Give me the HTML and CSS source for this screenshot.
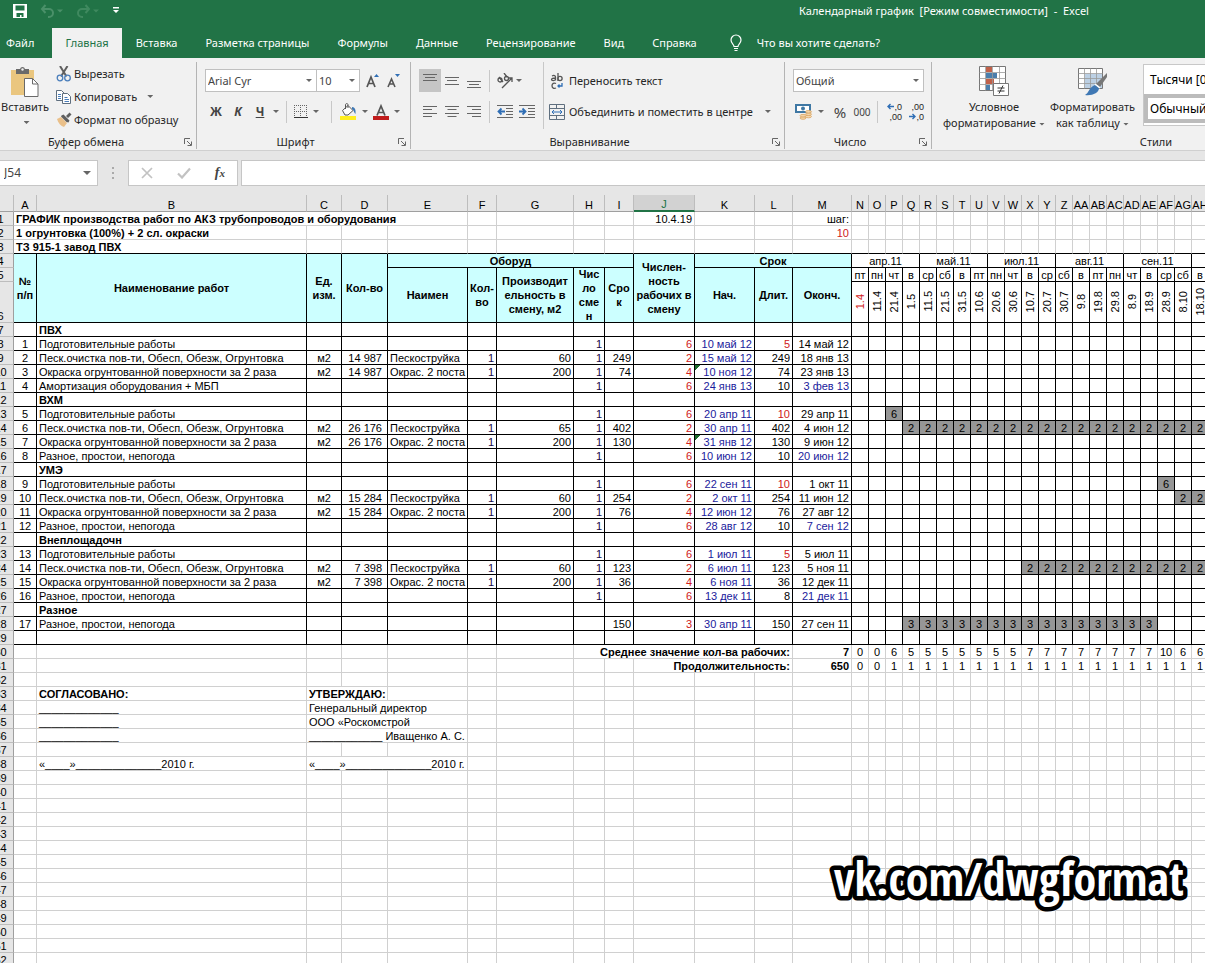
FILE: index.html
```html
<!DOCTYPE html>
<html lang="ru">
<head>
<meta charset="utf-8">
<title>Календарный график - Excel</title>
<link rel="stylesheet" href="styles.css">
</head>
<body>
<header class="titlebar">
  <div class="quick">
    <button class="ibtn" aria-label="Сохранить"><svg width="16" height="16" viewBox="0 0 16 16"><path d="M1 1h14v14H1z" fill="#fff"/><path d="M3.500 2.500h9v5h-9zM4.500 10h7v4H9.500v-2H8v2H4.500z" fill="#217346"/></svg></button>
    <button class="ibtn dim" aria-label="Отменить"><svg width="24" height="14" viewBox="0 0 24 14" fill="none" stroke="#4a9069" stroke-width="2"><path d="M5.500 1L2 5l3.500 4M2 5h7a4 4 0 0 1 0 8H8"/><path d="M17 5.500h6l-3 3z" fill="#4a9069" stroke="none"/></svg></button>
    <button class="ibtn dim" aria-label="Повторить"><svg width="24" height="14" viewBox="0 0 24 14" fill="none" stroke="#3f895f" stroke-width="2"><path d="M9.500 1L13 5L9.500 9M13 5H6a4 4 0 0 0 0 8h1"/><path d="M17 5.500h6l-3 3z" fill="#3f895f" stroke="none"/></svg></button>
    <button class="ibtn" aria-label="Настройка панели"><svg width="8" height="8" viewBox="0 0 8 8" fill="#fff"><path d="M1 0h6v1.500H1zM1 3h6L4 6z"/></svg></button>
  </div>
  <div class="doc">Календарный график&nbsp; [Режим совместимости]&nbsp; -&nbsp; Excel</div>
</header>
<nav class="tabs">
  <button class="tab file">Файл</button>
  <button class="tab on">Главная</button>
  <button class="tab">Вставка</button>
  <button class="tab">Разметка страницы</button>
  <button class="tab">Формулы</button>
  <button class="tab">Данные</button>
  <button class="tab">Рецензирование</button>
  <button class="tab">Вид</button>
  <button class="tab">Справка</button>
  <button class="tab tell"><svg width="14" height="18" viewBox="0 0 14 18" fill="none" stroke="#fff" stroke-width="1.200"><path d="M5 12.500C5 10.500 2 9.500 2 6a5 5 0 0 1 10 0c0 3.500-3 4.500-3 6.500zM5 14.500h4M5.500 16.500h3"/></svg>Что вы хотите сделать?</button>
</nav>
<section class="ribbon">
  <div class="group g-clip">
    <div class="gbody">
      <button class="big paste"><svg width="30" height="32" viewBox="0 0 30 32"><path d="M1 4h23v25H1z" fill="#eac67f"/><path d="M6 3h4a2.600 2.600 0 0 1 5 0h4v5H6z" fill="#6a6a6a"/><circle cx="12.500" cy="3.500" r="1.200" fill="#f1f1f1"/><path d="M14.500 12.500h8l5.500 5.500v12.500H14.500z" fill="#fff" stroke="#6a6a6a"/><path d="M22.500 12.500V18H28" fill="none" stroke="#6a6a6a"/></svg><span>Вставить</span><i class="caret"></i></button>
      <div class="stack">
        <button class="line"><svg width="16" height="16" viewBox="0 0 16 16" fill="none"><path d="M4 0l6.500 10.500M11.500 0L5 10.500" stroke="#5f5f5f" stroke-width="2"/><circle cx="4" cy="12" r="2.800" stroke="#4a7ebb" stroke-width="1.300"/><circle cx="11.500" cy="12" r="2.800" stroke="#4a7ebb" stroke-width="1.300"/></svg>Вырезать</button>
        <button class="line"><svg width="16" height="16" viewBox="0 0 16 16" fill="#fff" stroke="#5f6f7f"><path d="M.5 1.500h5l3 3v7h-8z"/><path d="M6.500 4.500h5l3 3v7h-8z"/><path d="M2 5.500h3M2 7.500h3M2 9.500h3M8.500 8.500h3M8.500 10.500h4.500M8.500 12.500h4.500" stroke="#4a7ebb"/></svg>Копировать<i class="caret"></i></button>
        <button class="line"><svg width="16" height="16" viewBox="0 0 16 16"><path d="M1 7l4-2 6 6-3 4C5 14 2 11 1 7z" fill="#eac08a"/><path d="M5.500 3.500l2-1 6 6-1 2-2-.5L5 4.500zM10 4l3.500-3.500 2 2L12 6z" fill="#5f5f5f"/></svg>Формат по образцу</button>
      </div>
    </div>
    <div class="glabel"><span>Буфер обмена</span><button class="launch" aria-label="Буфер обмена: параметры"><svg width="8" height="8" viewBox="0 0 8 8" fill="none" stroke="#666"><path d="M.5 6V.5H6M3 3l4 4M7.500 3.500v4h-4"/></svg></button></div>
  </div>

  <div class="group g-font">
    <div class="gbody rows">
      <div class="row">
        <span class="combo w-font"><select aria-label="Шрифт"><option>Arial Cyr</option></select><i class="caret"></i></span><span class="combo w-size"><select aria-label="Размер"><option>10</option></select><i class="caret"></i></span>
        <button class="ibtn gap6" aria-label="Увеличить размер"><svg width="16" height="18" viewBox="0 0 16 18"><path d="M2 15L6 5l4 10M3.500 11.500h5" fill="none" stroke="#555" stroke-width="1.700"/><path d="M9 5h5l-2.500-3z" fill="#2f6eb5"/></svg></button>
        <button class="ibtn gap6" aria-label="Уменьшить размер"><svg width="16" height="18" viewBox="0 0 16 18"><path d="M2 15l3.500-8L9 15M3.500 12h4" fill="none" stroke="#555" stroke-width="1.600"/><path d="M9 2h5l-2.500 3z" fill="#2f6eb5"/></svg></button>
      </div>
      <div class="row">
        <button class="fmt b">Ж</button><button class="fmt it">К</button><button class="fmt un">Ч</button><i class="caret"></i><i class="vsep"></i>
        <button class="ibtn" aria-label="Границы"><svg width="14" height="14" viewBox="0 0 14 14" stroke="#666" fill="none"><path d="M.5 0v13M6.500 0v13M12.500 0v13M0 .5h13M0 6.500h13" stroke-dasharray="1 1"/><path d="M0 12.500h14" stroke="#333"/></svg></button><i class="caret"></i><i class="vsep"></i>
        <button class="ibtn" aria-label="Цвет заливки"><svg width="18" height="18" viewBox="0 0 18 18"><path d="M1 13h16v4H1z" fill="#ffee20"/><path d="M3.500 7.500L9 2.500l5 5-5 4.500H6z" fill="#fff" stroke="#555"/><path d="M6.500 6V2c0-2 2.500-2 2.500 0v3" fill="none" stroke="#555"/><path d="M13 4c3 0 4 3 3.500 7C15 10 15 7 13 6z" fill="#3f78b4"/></svg></button><i class="caret"></i>
        <button class="ibtn" aria-label="Цвет текста"><svg width="16" height="18" viewBox="0 0 16 18"><path d="M0 13h16v4H0z" fill="#c01c1c"/><path d="M4 12.500L8 3l4 9.500M5.500 9.500h5" fill="none" stroke="#555" stroke-width="1.700"/></svg></button><i class="caret"></i>
      </div>
    </div>
    <div class="glabel"><span>Шрифт</span><button class="launch" aria-label="Шрифт: параметры"><svg width="8" height="8" viewBox="0 0 8 8" fill="none" stroke="#666"><path d="M.5 6V.5H6M3 3l4 4M7.500 3.500v4h-4"/></svg></button></div>
  </div>

  <div class="group g-align">
    <div class="gbody">
      <div class="stack2">
        <div class="row">
          <button class="al on" aria-label="По верхнему краю"><svg width="14" height="14" viewBox="0 0 14 14" stroke="#666"><path d="M0 .5h14M2 3.500h10M0 6.500h14"/></svg></button>
          <button class="al" aria-label="По середине"><svg width="14" height="14" viewBox="0 0 14 14" stroke="#666"><path d="M0 3.500h14M2 6.500h10M0 10.500h14"/></svg></button>
          <button class="al" aria-label="По нижнему краю"><svg width="14" height="14" viewBox="0 0 14 14" stroke="#666"><path d="M0 7.500h14M2 10.500h10M0 13.500h14"/></svg></button>
          <i class="vsep"></i>
          <button class="al" aria-label="Ориентация"><svg width="18" height="16" viewBox="0 0 18 16" fill="none" stroke="#555"><path d="M6 15L16 5M12 5h4v4" stroke-width="1.300"/><circle cx="4" cy="7" r="2" stroke-width="1.300"/><path d="M3 4l4 5M8 0l3 4" stroke-width="1.300"/><circle cx="10.500" cy="5.500" r="2" stroke-width="1.300"/></svg></button><i class="caret"></i>
        </div>
        <div class="row">
          <button class="al" aria-label="По левому краю"><svg width="14" height="12" viewBox="0 0 14 12" stroke="#666"><path d="M0 .5h14M0 3.500h9M0 7.500h14M0 10.500h9"/></svg></button>
          <button class="al" aria-label="По центру"><svg width="14" height="12" viewBox="0 0 14 12" stroke="#666"><path d="M0 .5h14M2.500 3.500h9M0 7.500h14M2.500 10.500h9"/></svg></button>
          <button class="al" aria-label="По правому краю"><svg width="14" height="12" viewBox="0 0 14 12" stroke="#666"><path d="M0 .5h14M5 3.500h9M0 7.500h14M5 10.500h9"/></svg></button>
          <i class="vsep"></i>
          <button class="al" aria-label="Уменьшить отступ"><svg width="16" height="13" viewBox="0 0 16 13" stroke="#666" fill="none"><path d="M0 .5h16M9 3.500h7M9 6.500h7M9 9.500h7M0 12.500h16"/><path d="M8 6.500H2M4.500 3.500l-3 3 3 3" stroke="#2f6eb5" stroke-width="1.800"/></svg></button>
          <button class="al" aria-label="Увеличить отступ"><svg width="16" height="13" viewBox="0 0 16 13" stroke="#666" fill="none"><path d="M0 .5h16M9 3.500h7M9 6.500h7M9 9.500h7M0 12.500h16"/><path d="M0 6.500h6M3.500 3.500l3 3-3 3" stroke="#2f6eb5" stroke-width="1.800"/></svg></button>
        </div>
      </div>
      <div class="stack2 wraps">
        <button class="line"><svg width="16" height="18" viewBox="0 0 16 18" fill="none" stroke="#555" stroke-width="1.300"><path d="M3 4c2-1 3.500-.5 3.500 1v3.500M6.500 6C4 6 2.500 6.200 2.500 7.500S5.500 9 6.500 7.500M9 1v8"/><circle cx="11" cy="6.500" r="2.100"/><path d="M7 11.500c-2-1-4 0-4 2.300s2 3.200 4 2.200"/><path d="M13 11v3H9M10.500 12.500L9 14l1.500 1.500" stroke="#2f6eb5"/></svg>Переносить текст</button>
        <button class="line"><svg width="16" height="16" viewBox="0 0 16 16" fill="none" stroke="#5f6f7f"><path d="M.5.5h15v15H.5zM.5 4.500h15M.5 11.500h15M7.500.5v4M7.500 11.500v4"/><path d="M3 8h10M5 6L3 8l2 2M11 6l2 2-2 2" stroke="#2f6eb5"/></svg>Объединить и поместить в центре<i class="caret"></i></button>
      </div>
    </div>
    <div class="glabel"><span>Выравнивание</span><button class="launch" aria-label="Выравнивание: параметры"><svg width="8" height="8" viewBox="0 0 8 8" fill="none" stroke="#666"><path d="M.5 6V.5H6M3 3l4 4M7.500 3.500v4h-4"/></svg></button></div>
  </div>

  <div class="group g-num">
    <div class="gbody rows">
      <div class="row"><span class="combo w-num"><select aria-label="Числовой формат"><option>Общий</option></select><i class="caret"></i></span></div>
      <div class="row">
        <button class="ibtn money" aria-label="Денежный формат"><svg width="18" height="18" viewBox="0 0 18 18"><path d="M1 2h14v7H1z" fill="#fff" stroke="#3f78a4" stroke-width="2"/><circle cx="8" cy="5.500" r="2" fill="#3f78a4"/><g fill="#f3d6ae" stroke="#dba560" stroke-width=".8"><ellipse cx="13.500" cy="13.500" rx="3" ry="1.300"/><ellipse cx="13.500" cy="11.200" rx="3" ry="1.300"/><ellipse cx="13.500" cy="8.800" rx="3" ry="1.300"/><ellipse cx="8" cy="15" rx="3" ry="1.300"/><ellipse cx="8" cy="12.700" rx="3" ry="1.300"/></g></svg></button><i class="caret"></i>
        <button class="fmt pct">%</button><button class="fmt th">000</button><i class="vsep"></i>
        <button class="dec" aria-label="Увеличить разрядность"><span><svg width="7" height="7" viewBox="0 0 7 7" fill="none" stroke="#2f6eb5" stroke-width="1.400"><path d="M7 3.500H1M3.500 1L1 3.500 3.500 6"/></svg>,0</span><span>,00</span></button>
        <button class="dec" aria-label="Уменьшить разрядность"><span>,00</span><span><svg width="7" height="7" viewBox="0 0 7 7" fill="none" stroke="#2f6eb5" stroke-width="1.400"><path d="M0 3.500h6M3.500 1L6 3.500 3.500 6"/></svg>,0</span></button>
      </div>
    </div>
    <div class="glabel"><span>Число</span><button class="launch" aria-label="Число: параметры"><svg width="8" height="8" viewBox="0 0 8 8" fill="none" stroke="#666"><path d="M.5 6V.5H6M3 3l4 4M7.500 3.500v4h-4"/></svg></button></div>
  </div>

  <div class="group g-style">
    <div class="gbody">
      <button class="big"><svg width="31" height="32" viewBox="0 0 31 32"><path d="M1.500.5h26v24h-26z" fill="#fff" stroke="#777"/><path d="M8 1h6v5H8zM8 13h8v5H8z" fill="#c0614a"/><path d="M8 7h11v5H8zM8 19h4v5H8z" fill="#4a7eac"/><path d="M1.500 6.500h26M1.500 12.500h26M1.500 18.500h26M7.500.5v24M14.500.5v24M21.500.5v24" fill="none" stroke="#999" stroke-width=".8"/><path d="M15.500 17.500h15v12h-15z" fill="#fff" stroke="#777"/><path d="M19.500 22h7M19.500 25h7M25 19.500l-4 8" stroke="#333" fill="none"/></svg><span>Условное</span><span>форматирование<i class="caret"></i></span></button>
      <button class="big"><svg width="31" height="32" viewBox="0 0 31 32"><path d="M1.500 2.500h24v20h-24z" fill="#fff" stroke="#777"/><path d="M8 8h17v14H8z" fill="#bcd0e4"/><path d="M1.500 7.500h24M1.500 12.500h24M1.500 17.500h24M7.500 2.500v20M13.500 2.500v20M19.500 2.500v20" fill="none" stroke="#999" stroke-width=".8"/><path d="M30 7v4l-7 10-4-3z" fill="#777"/><path d="M18 19l4 3c0 5-7 8-14 7 4-2 4-8 10-10z" fill="#3f78b4"/><path d="M18 18l5 4" stroke="#fff" stroke-width="1.500"/></svg><span>Форматировать</span><span>как таблицу<i class="caret"></i></span></button>
      <div class="gallery"><button class="style">Тысячи [0]</button><button class="style cur">Обычный</button></div>
    </div>
    <div class="glabel"><span>Стили</span></div>
  </div>
</section>

<section class="fbar">
  <div class="namebox"><input aria-label="Имя ячейки" value="J54"><i class="caret"></i></div>
  <svg class="dots" width="3" height="12" viewBox="0 0 3 12" fill="#aaa"><path d="M0 0h2v2H0zM0 5h2v2H0zM0 10h2v2H0z"/></svg>
  <div class="fbtns">
    <button class="ibtn" aria-label="Отмена"><svg width="12" height="12" viewBox="0 0 12 12" stroke="#c2c2c2" stroke-width="1.700"><path d="M1 1l10 10M11 1L1 11"/></svg></button>
    <button class="ibtn" aria-label="Ввод"><svg width="14" height="12" viewBox="0 0 14 12" fill="none" stroke="#c2c2c2" stroke-width="2.200"><path d="M1 6.500l4 4L13 1.500"/></svg></button>
    <button class="fx">f<small>x</small></button>
  </div>
  <input class="formula" aria-label="Строка формул">
</section>

<main class="sheet">
  <table class="grid" id="grid"></table>
</main>
<svg class="mark" width="372" height="66" viewBox="0 0 372 66"><text x="8" y="46">vk.com/dwgformat</text></svg>
<script src="grid.js"></script>
</body>
</html>
```

FILE: styles.css
```css
* { box-sizing: border-box; }
body {
  margin: 0;
  height: 100vh;
  overflow: hidden;
  display: flex;
  flex-direction: column;
  background: #fff;
  color: #262626;
  font: 12px/16px "Noto Sans", "Open Sans", sans-serif;
}
button, input, select {
  font: inherit;
  color: inherit;
  background: none;
  border: 0;
  padding: 0;
  margin: 0;
}
svg { display: block; flex: none; }

.caret {
  flex: none;
  width: 6px;
  height: 3px;
  background: #666;
  clip-path: polygon(0 0, 100% 0, 50% 100%);
}

/* title bar and tabs */
.titlebar {
  flex: none;
  height: 28px;
  display: grid;
  grid-template-columns: 799px auto;
  align-items: center;
  padding-bottom: 7px;
  background: #217346;
  color: #fff;
  font-size: 11px;
}
.quick { display: flex; align-items: center; gap: 12px; padding-left: 12px; }
.doc { white-space: nowrap; }
.tabs {
  flex: none;
  height: 30px;
  display: flex;
  background: #217346;
  color: #fff;
  font-size: 11px;
}
.tab { padding: 0 14px; white-space: nowrap; }
.tab.file { padding: 0 18px 0 6px; }
.tab.on { background: #f1f1f1; color: #217346; padding: 0 13px; }
.tab.tell { display: flex; align-items: center; gap: 14px; padding-left: 18px; }

/* ribbon */
.ribbon {
  flex: none;
  height: 93px;
  display: flex;
  background: #f1f1f1;
  border-bottom: 1px solid #d0d0d0;
  padding: 4px 0 1px;
  font-size: 11px;
  white-space: nowrap;
  overflow: hidden;
}
.group {
  flex: none;
  display: flex;
  flex-direction: column;
  border-right: 1px solid #b4b4b4;
}
.g-clip { width: 197px; }
.g-font { width: 214px; padding-left: 8px; }
.g-align { width: 374px; padding-left: 8px; }
.g-num { width: 147px; padding-left: 8px; }
.g-style { flex: 1 0 472px; border-right: 0; }
.gbody { flex: 1; display: flex; }
.rows { flex-direction: column; gap: 8px; padding-top: 7px; }
.row { display: flex; align-items: center; height: 23px; }
.glabel {
  height: 14px;
  display: grid;
  grid-template-columns: 1fr 12px;
  column-gap: 12px;
  align-items: center;
  line-height: 14px;
  text-align: center;
}
.ibtn { flex: none; }
.gap6 { margin-left: 5px; }
.big {
  display: flex;
  flex-direction: column;
  align-items: center;
  padding-top: 4px;
}
.big svg { margin-bottom: 1px; }
.big .caret { display: inline-block; vertical-align: middle; margin-left: 3px; }
.paste { width: 50px; }
.paste .caret { margin-top: 6px; }
.stack { padding: 0 0 0 6px; display: flex; flex-direction: column; }
.line { display: flex; align-items: center; gap: 2px; height: 23px; }
.line .caret { margin-left: 8px; }
.combo {
  display: grid;
  grid-template-columns: 1fr 10px;
  align-items: center;
  height: 23px;
  background: #fff;
  border: 1px solid #c0c0c0;
  color: #444;
}
.combo select { appearance: none; height: 21px; padding-left: 2px; min-width: 0; }
.w-font { width: 112px; }
.w-size { width: 43px; border-left: 0; }
.w-num { width: 131px; }
.vsep { width: 1px; height: 22px; margin: 0 7px; background: #c8c8c8; }
.fmt { width: 22px; color: #444; font-weight: 700; font-size: 12px; }
.it { font-style: italic; }
.un { text-decoration: underline; }
.g-font .fmt + .caret { margin-left: 2px; }
.ibtn + .caret { margin: 0 5px; }
.stack2 { display: flex; flex-direction: column; gap: 8px; padding-top: 7px; }
.g-align .stack2:first-child { width: 124px; }
.wraps { border-left: 1px solid #c8c8c8; padding-left: 5px; margin-bottom: 6px; }
.wraps .line { gap: 4px; }
.al { width: 22px; height: 23px; display: grid; place-items: center; }
.al.on { background: #c5c5c5; }
.stack2 .vsep { margin: 0 4px; }
.money { margin-left: 2px; }
.pct { font-size: 15px; font-weight: 400; }
.th { font-size: 10px; font-weight: 400; }
.g-num .vsep { margin: 0 4px; }
.dec {
  width: 22px;
  display: flex;
  flex-direction: column;
  padding-right: 2px;
  font: 9px/10px "Liberation Sans", sans-serif;
}
.dec span { display: flex; align-items: center; justify-content: flex-end; }
.g-style .gbody { padding-left: 11px; gap: 5px; }
.gallery {
  flex: 1;
  height: 62px;
  margin: 2px 0 0 3px;
  border: 1px solid #c8c8c8;
  border-right: 0;
  background: #fff;
  color: #000;
  font-size: 12px;
  display: flex;
  flex-direction: column;
}
.style { height: 29px; padding-left: 6px; text-align: left; }
.style.cur { border: 4px solid #bcbcbc; padding-left: 2px; }

/* formula bar */
.fbar {
  flex: none;
  display: flex;
  align-items: center;
  height: 44px;
  background: #e6e6e6;
  color: #444;
}
.namebox {
  width: 98px;
  height: 26px;
  display: grid;
  grid-template-columns: 1fr 14px;
  align-items: center;
  background: #fff;
  border: 1px solid #c6c6c6;
  border-left: 0;
}
.namebox input { min-width: 0; padding-left: 4px; }
.namebox .caret { width: 8px; height: 4px; }
.dots { margin: 0 13px 0 14px; }
.fbtns {
  width: 110px;
  height: 26px;
  display: flex;
  align-items: center;
  justify-content: space-around;
  background: #fff;
  border: 1px solid #c6c6c6;
}
.fx { font: italic 700 14px/16px "Liberation Serif", serif; }
.fx small { font-size: 11px; }
.formula {
  flex: 1;
  height: 26px;
  margin-left: 3px;
  background: #fff;
  border: 1px solid #c6c6c6;
  border-right: 0;
}

/* worksheet */
.sheet { flex: 1; overflow: hidden; background: #fff; }
.grid {
  table-layout: fixed;
  width: 1221px;
  margin-left: -12px;
  border-collapse: separate;
  border-spacing: 0;
  font: 11px/12px "Liberation Sans", Arial, sans-serif;
  color: #000;
  white-space: nowrap;
}
.grid th, .grid td {
  height: 14px;
  padding: 1px 2px 0;
  border: solid #d0d0d0;
  border-width: 0 1px 1px 0;
  font-weight: 400;
  text-align: left;
}
.grid thead th {
  height: 17px;
  padding: 3px 0 0;
  background: #e6e6e6;
  border-right-color: #bdbdbd;
  border-bottom-color: #9f9f9f;
  text-align: center;
}
.grid thead .sel { background: #d2d2d2; color: #217346; border-bottom: 2px solid #217346; }
.grid tbody th { padding: 1px 0 0; background: #e6e6e6; border-color: #bdbdbd; border-right-color: #9f9f9f; text-align: center; vertical-align: bottom; }
.grid .k { border-color: #000; }
.grid .kb { border-bottom-color: #000; }
.grid .r { text-align: right; }
.grid .qty { padding-right: 5px; }
.grid .c { text-align: center; padding: 1px 0 0; }
.grid .b { font-weight: 700; }
.grid .h {
  padding: 0;
  background: #ccffff;
  font-weight: 700;
  text-align: center;
  line-height: 14px;
}
.grid .h.one { padding-top: 1px; line-height: 12px; }
.grid .tight div { margin: -2px 0; }
.grid .date { height: 41px; }
.grid .date span { writing-mode: vertical-rl; transform: rotate(180deg); line-height: 16px; }
.grid .red { color: #d02020; }
.grid .navy { color: #1a1a9c; }
.grid .dark { color: #180848; }
.grid .busy { background: #969696; }
.grid .flag { background: linear-gradient(135deg, #1e6b2e 4px, transparent 4px); }

.mark {
  position: absolute;
  left: 826px;
  top: 850px;
  fill: #fff;
  stroke: #000;
  stroke-width: 9px;
  stroke-linejoin: round;
  paint-order: stroke fill;
  font: 800 46px "Open Sans Condensed", "Noto Sans Condensed", "Open Sans", sans-serif;
}
```

FILE: grid.js
```js
const COLS = ['A','B','C','D','E','F','G','H','I','J','K','L','M','N','O','P','Q','R','S','T','U','V','W','X','Y','Z','AA','AB','AC','AD','AE','AF','AG','AH'];
const WIDTHS = [23, 270, 35, 46, 80, 29, 77, 31, 29, 61, 60, 38, 59];
const DAY_WIDTH = 17;
const DAYS = 'пт пн чт в ср сб в пт пн чт в ср сб в пт пн чт в ср сб в'.split(' ');
const DATES = '1.4 11.4 21.4 1.5 11.5 21.5 31.5 10.6 20.6 30.6 10.7 20.7 30.7 9.8 19.8 29.8 8.9 18.9 28.9 8.10 18.10'.split(' ');
const FIRST = 13;

const PREP = 'Подготовительные работы';
const SAND = 'Песк.очистка пов-ти, Обесп, Обезж, Огрунтовка';
const PAINT = 'Окраска огрунтованной поверхности за 2 раза';
const MISC = 'Разное, простои, непогода';
const BLAST = 'Пескоструйка';
const POSTS = 'Окрас. 2 поста';

// columns A..M of the schedule, rows 7..29; a single string is a section title
const TASKS = [
  'ПВХ',
  ['1', PREP, '', '', '', '', '', '1', '', '6', '10 май 12', '5', '14 май 12'],
  ['2', SAND, 'м2', '14 987', BLAST, '1', '60', '1', '249', '2', '15 май 12', '249', '18 янв 13'],
  ['3', PAINT, 'м2', '14 987', POSTS, '1', '200', '1', '74', '4', '10 ноя 12', '74', '23 янв 13'],
  ['4', 'Амортизация оборудования + МБП', '', '', '', '', '', '1', '', '6', '24 янв 13', '10', '3 фев 13'],
  'ВХМ',
  ['5', PREP, '', '', '', '', '', '1', '', '6', '20 апр 11', '10', '29 апр 11'],
  ['6', SAND, 'м2', '26 176', BLAST, '1', '65', '1', '402', '2', '30 апр 11', '402', '4 июн 12'],
  ['7', PAINT, 'м2', '26 176', POSTS, '1', '200', '1', '130', '4', '31 янв 12', '130', '9 июн 12'],
  ['8', MISC, '', '', '', '', '', '1', '', '6', '10 июн 12', '10', '20 июн 12'],
  'УМЭ',
  ['9', PREP, '', '', '', '', '', '1', '', '6', '22 сен 11', '10', '1 окт 11'],
  ['10', SAND, 'м2', '15 284', BLAST, '1', '60', '1', '254', '2', '2 окт 11', '254', '11 июн 12'],
  ['11', PAINT, 'м2', '15 284', POSTS, '1', '200', '1', '76', '4', '12 июн 12', '76', '27 авг 12'],
  ['12', MISC, '', '', '', '', '', '1', '', '6', '28 авг 12', '10', '7 сен 12'],
  'Внеплощадочн',
  ['13', PREP, '', '', '', '', '', '1', '', '6', '1 июл 11', '5', '5 июл 11'],
  ['14', SAND, 'м2', '7 398', BLAST, '1', '60', '1', '123', '2', '6 июл 11', '123', '5 ноя 11'],
  ['15', PAINT, 'м2', '7 398', POSTS, '1', '200', '1', '36', '4', '6 ноя 11', '36', '12 дек 11'],
  ['16', MISC, '', '', '', '', '', '1', '', '6', '13 дек 11', '8', '21 дек 11'],
  'Разное',
  ['17', MISC, '', '', '', '', '', '', '150', '3', '30 апр 11', '150', '27 сен 11'],
  ''
];
// row: [first column, last column, workers]
const BARS = { 13: ['P', 'P', 6], 14: ['Q', 'AH', 2], 18: ['AF', 'AF', 6], 19: ['AG', 'AH', 2], 24: ['X', 'AH', 2], 28: ['Q', 'AE', 3] };
const BLUE_END = [11, 16, 21, 26];
const FLAGGED = [10, 15];

const cell = (text = '', cls = '', attr = '') => `<td class="${cls}" ${attr}>${text}</td>`;
const blanks = (n, cls = '') => cell('', cls).repeat(n);
const row = (n, cells) => `<tr><th scope="row">${n}</th>${cells}</tr>`;
const span = (n) => `colspan="${n}"`;
const down = (n) => `rowspan="${n}"`;

let html = '<colgroup><col style="width:26px">';
COLS.forEach((c, i) => { html += `<col style="width:${WIDTHS[i] || DAY_WIDTH}px">`; });
html += '</colgroup><thead><tr><th></th>';
COLS.forEach((c) => { html += `<th scope="col"${c === 'J' ? ' class="sel"' : ''}>${c}</th>`; });
html += '</tr></thead><tbody>';

html += row(1, cell('ГРАФИК производства работ по АКЗ трубопроводов и оборудования', 'b', span(5)) + blanks(4) + cell('10.4.19', 'r') + blanks(2) + cell('шаг:', 'r') + blanks(21));
html += row(2, cell('1 огрунтовка (100%) + 2 сл. окраски', 'b', span(2)) + blanks(10) + cell('10', 'r red') + blanks(21));
html += row(3, cell('ТЗ 915-1 завод ПВХ', 'b kb', span(2)) + blanks(32, 'kb'));

html += row(4,
  cell('№<br>п/п', 'k h', down(3)) + cell('Наименование работ', 'k h', down(3)) + cell('Ед.<br>изм.', 'k h', down(3)) +
  cell('Кол-во', 'k h', down(3)) + cell('Оборуд', 'k h one', span(5)) + cell('Числен-<br>ность<br>рабочих в<br>смену', 'k h', down(3)) +
  cell('Срок', 'k h one', span(3)) + ['апр.11', 'май.11', 'июл.11', 'авг.11', 'сен.11'].map((m) => cell(m, 'k c', span(4))).join('') + cell('', 'k'));
html += row(5,
  cell('Наимен', 'k h', down(2)) + cell('Кол-<br>во', 'k h', down(2)) + cell('Производит<br>ельность в<br>смену, м2', 'k h', down(2)) +
  cell('<div>Чис<br>ло<br>сме<br>н</div>', 'k h tight', down(2)) + cell('Сро<br>к', 'k h', down(2)) + cell('Нач.', 'k h', down(2)) +
  cell('Длит.', 'k h', down(2)) + cell('Оконч.', 'k h', down(2)) + DAYS.map((d) => cell(d, 'k c')).join(''));
html += row(6, DATES.map((d, i) => cell(`<span>${d}</span>`, `k c date${i ? '' : ' red'}`)).join(''));

TASKS.forEach((t, i) => {
  const n = i + 7;
  let cells;
  if (typeof t === 'string') {
    cells = cell('', 'k') + cell(t, 'k b') + blanks(11, 'k');
  } else {
    const kinds = ['c', '', 'c', 'r qty', '', 'r dark', 'r', 'r dark', 'r', 'r red', 'r navy', 'r', 'r'];
    cells = t.map((v, j) => {
      let cls = kinds[j];
      if (j === 10 && FLAGGED.includes(n)) cls += ' flag';
      if (j === 11 && t[1] === PREP) cls += ' red';
      if (j === 12 && BLUE_END.includes(n)) cls += ' navy';
      return cell(v, 'k ' + cls);
    }).join('');
  }
  const bar = BARS[n];
  for (let c = FIRST; c < COLS.length; c++) {
    const busy = bar && c >= COLS.indexOf(bar[0]) && c <= COLS.indexOf(bar[1]);
    cells += busy ? cell(bar[2], 'k c busy') : cell('', 'k');
  }
  html += row(n, cells);
});

const avg = [0, 0, 6, 5, 5, 5, 5, 5, 5, 5, 7, 7, 7, 7, 7, 7, 7, 7, 10, 6, 6];
html += row(30, blanks(7) + cell('Среднее значение кол-ва рабочих:', 'r b', span(5)) + cell('7', 'r b') + avg.map((v) => cell(v, 'c')).join(''));
html += row(31, blanks(9) + cell('Продолжительность:', 'r b', span(3)) + cell('650', 'r b') + avg.map((v) => cell(v ? 1 : 0, 'c')).join(''));
html += row(32, blanks(34));
html += row(33, blanks(1) + cell('СОГЛАСОВАНО:', 'b') + cell('УТВЕРЖДАЮ:', 'b', span(2)) + blanks(30));
html += row(34, blanks(1) + cell('_____________') + cell('Генеральный директор', '', span(3)) + blanks(29));
html += row(35, blanks(1) + cell('_____________') + cell('ООО «Роскомстрой', '', span(3)) + blanks(29));
html += row(36, blanks(1) + cell('_____________') + cell('____________ Иващенко А. С.', '', span(3)) + blanks(29));
html += row(37, blanks(34));
html += row(38, blanks(1) + cell('«____»______________2010 г.') + cell('«____»______________2010 г.', '', span(3)) + blanks(29));
for (let n = 39; n <= 52; n++) html += row(n, blanks(34));

document.getElementById('grid').innerHTML = html + '</tbody>';
```
